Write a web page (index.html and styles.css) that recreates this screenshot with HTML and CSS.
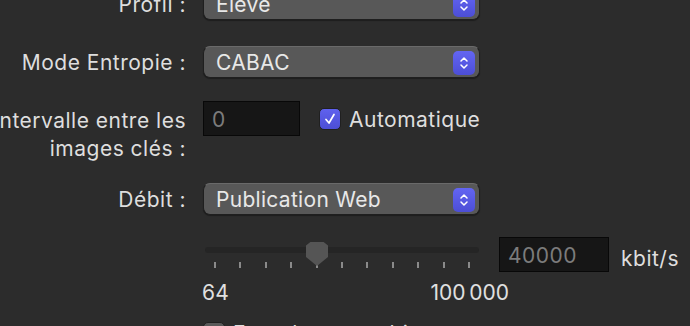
FILE: index.html
```html
<!DOCTYPE html>
<html lang="fr">
<head>
  <meta charset="UTF-8">
  <title>Réglages vidéo</title>
  <link rel="stylesheet" href="styles.css">
</head>
<body>
  <div class="panel">
    <div class="row row-profile">
      <label class="label"><span>Profil :</span></label>
      <div class="popup">
        <span class="popup-value">Élève</span>
        <span class="stepper">
          <svg width="10" height="16" viewBox="0 0 10 16"><path d="M2 6 L5 3 L8 6 M2 10 L5 13 L8 10" fill="none" stroke="#fff" stroke-width="1.5" stroke-linecap="round" stroke-linejoin="round"/></svg>
        </span>
      </div>
    </div>

    <div class="row row-entropy">
      <label class="label"><span>Mode Entropie :</span></label>
      <div class="popup">
        <span class="popup-value">CABAC</span>
        <span class="stepper">
          <svg width="10" height="16" viewBox="0 0 10 16"><path d="M2 6 L5 3 L8 6 M2 10 L5 13 L8 10" fill="none" stroke="#fff" stroke-width="1.5" stroke-linecap="round" stroke-linejoin="round"/></svg>
        </span>
      </div>
    </div>

    <div class="row row-interval">
      <label class="label label-multi"><span>Intervalle entre les<br>images clés :</span></label>
      <div class="field field-small">0</div>
      <div class="check">
        <span class="checkbox on">
          <svg width="14" height="14" viewBox="0 0 14 14"><path d="M3 7.5 L6 11 L11 2.5" fill="none" stroke="#fff" stroke-width="1.7" stroke-linecap="round" stroke-linejoin="round"/></svg>
        </span>
        <span class="check-text">Automatique</span>
      </div>
    </div>

    <div class="row row-rate">
      <label class="label"><span>Débit :</span></label>
      <div class="popup">
        <span class="popup-value">Publication Web</span>
        <span class="stepper">
          <svg width="10" height="16" viewBox="0 0 10 16"><path d="M2 6 L5 3 L8 6 M2 10 L5 13 L8 10" fill="none" stroke="#fff" stroke-width="1.5" stroke-linecap="round" stroke-linejoin="round"/></svg>
        </span>
      </div>
    </div>

    <div class="row row-slider">
      <span class="label"></span>
      <div class="slider">
        <div class="track">
          <span class="thumb"></span>
        </div>
        <div class="ticks">
          <i></i><i></i><i></i><i></i><i></i><i></i><i></i><i></i><i></i><i></i><i></i>
        </div>
        <div class="scale">
          <span>64</span>
          <span>100&#8239;000</span>
        </div>
      </div>
      <div class="field field-rate">40000</div>
      <span class="unit">kbit/s</span>
    </div>

    <div class="row row-last">
      <span class="label"></span>
      <div class="check">
        <span class="checkbox"></span>
        <span class="check-text">Encoder en multipassage</span>
      </div>
    </div>
  </div>
</body>
</html>
```

FILE: styles.css
```css
html, body {
  margin: 0;
  height: 100%;
  overflow: hidden;
  background-color: #2c2c2c;
}
body {
  font-family: Inter, "Noto Sans", sans-serif;
  font-size: 21px;
  letter-spacing: 0.5px;
  color: #dedede;
}
.panel {
  display: flex;
  flex-direction: column;
  margin-top: -12px;
}
.row {
  display: flex;
  align-items: center;
}
.label {
  width: 186px;
  flex-shrink: 0;
  display: flex;
  justify-content: flex-end;
  text-align: right;
  margin-right: 17px;
  white-space: nowrap;
  padding-top: 1px;
}
.label-multi {
  line-height: 28px;
  padding-top: 6px;
}
.row-entropy {
  margin-top: 26px;
}
.row-interval {
  margin-top: 23px;
  align-items: flex-start;
}
.row-rate {
  margin-top: 20px;
}
.row-slider {
  margin-top: 22px;
  align-items: flex-start;
}
.row-last {
  margin-top: 10px;
}
.popup {
  width: 277px;
  height: 32px;
  box-sizing: border-box;
  display: flex;
  align-items: center;
  justify-content: space-between;
  padding: 1px 4px 0 12px;
  background-color: #585858;
  border: 1px solid #1f1f1f;
  border-top-color: #6a6a6a;
  border-radius: 7px;
  box-shadow: 0 1px 1px rgba(0,0,0,0.35);
  color: #e8e8e8;
  letter-spacing: 0.3px;
}
.stepper {
  width: 22px;
  height: 24px;
  display: flex;
  align-items: center;
  justify-content: center;
  border-radius: 5px;
  background: linear-gradient(#6365f2, #4c4ed6);
}
.field {
  box-sizing: border-box;
  height: 35px;
  display: flex;
  align-items: center;
  padding: 2px 0 0 8px;
  background-color: #161616;
  border: 1px solid #080808;
  color: #7c7c7c;
}
.field-small {
  width: 97px;
  margin-right: 19px;
}
.check {
  display: flex;
  align-items: center;
  height: 35px;
}
.check-text {
  padding-top: 2px;
}
.checkbox {
  width: 22px;
  height: 22px;
  box-sizing: border-box;
  display: flex;
  align-items: center;
  justify-content: center;
  border-radius: 5px;
  background-color: #5a5a5a;
  border: 1px solid #202020;
  margin-right: 8px;
}
.checkbox.on {
  background: linear-gradient(#5f61ee, #4c4ed4);
}
.slider {
  width: 277px;
  padding-top: 10px;
}
.track {
  position: relative;
  margin-left: 2px;
  width: 274px;
  height: 6px;
  border-radius: 3px;
  background-color: #252525;
}
.thumb {
  position: absolute;
  left: 101px;
  top: -5px;
  width: 22px;
  height: 24px;
  background-color: #555555;
  clip-path: polygon(20% 0, 80% 0, 100% 15%, 100% 62%, 50% 100%, 0 62%, 0 15%);
}
.ticks {
  display: flex;
  justify-content: space-between;
  margin: 9px 10px 0 11px;
}
.ticks i {
  width: 2px;
  height: 6px;
  background-color: #8a8a8a;
}
.scale {
  display: flex;
  justify-content: space-between;
  margin-top: 12px;
  margin-right: -29px;
  margin-left: -1px;
  color: #e0e0e0;
  letter-spacing: 0.2px;
}
.field-rate {
  width: 110px;
  margin-left: 19px;
  margin-right: 12px;
}
.unit {
  line-height: 35px;
  padding-top: 4px;
}
```
